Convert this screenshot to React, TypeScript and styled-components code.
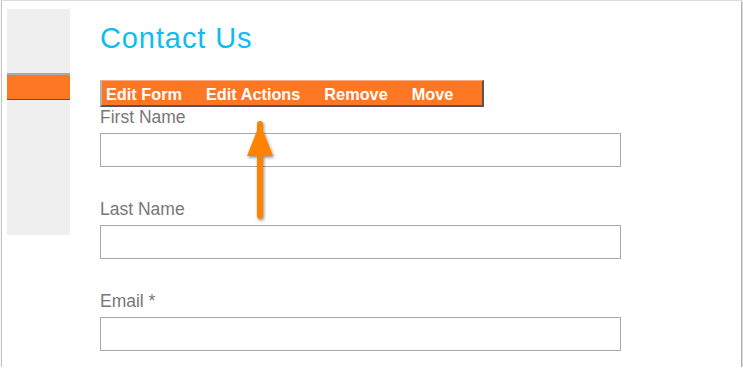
import React from "react";
import styled, { createGlobalStyle } from "styled-components";

const Global = createGlobalStyle`
  html, body { margin: 0; padding: 0; background: #ffffff; }
  body { font-family: "Liberation Sans", Arial, sans-serif; }
`;

const Frame = styled.div`
  position: relative;
  box-sizing: border-box;
  margin-left: 1px;
  width: 740px;
  height: 367px;
  background: #fff;
  border-top: 1px solid #dcdcdc;
  border-left: 1px solid #c4c4c4;
  box-shadow: 1px 1px 2px rgba(0, 0, 0, 0.45);
  padding: 8px 0 0 5px;
  display: flex;
  gap: 30px;
`;

const Sidebar = styled.div`
  width: 63px;
  height: 226px;
  background: #efefef;
  padding-top: 64px;
  box-sizing: border-box;
`;

const SideTab = styled.div`
  height: 24px;
  background: #fe7722;
  border-top: 2px solid #a9a9a9;
  border-bottom: 1px solid #555;
`;

const Main = styled.div`
  position: relative;
  display: flex;
  flex-direction: column;
  flex: 1;
`;

const Title = styled.h1`
  margin: 12px 0 0 0;
  font-family: "Liberation Sans", Arial, sans-serif;
  font-weight: normal;
  font-size: 29px;
  line-height: 34px;
  letter-spacing: 0.9px;
  color: #0bbdf2;
`;

const Toolbar = styled.div`
  margin-top: 25px;
  box-sizing: border-box;
  width: 384px;
  height: 27px;
  background: #fe7722;
  border-top: 1px solid #f6ad84;
  border-left: 2px solid #b5b5b5;
  border-right: 2px solid #555;
  border-bottom: 2px solid #555;
  padding: 2px 0 0 4px;
  display: flex;
  gap: 24px;
`;

const ToolItem = styled.span`
  font-family: "Liberation Sans", Arial, sans-serif;
  font-weight: bold;
  font-size: 16.3px;
  line-height: 23px;
  color: #fff;
  white-space: nowrap;
`;

const Field = styled.div`
  display: flex;
  flex-direction: column;
  margin-bottom: 32px;
`;

const Label = styled.label`
  font-family: "Liberation Sans", Arial, sans-serif;
  font-size: 17.5px;
  line-height: 20px;
  color: #777;
`;

const Input = styled.div`
  margin-top: 6px;
  box-sizing: border-box;
  width: 521px;
  height: 34px;
  border: 1px solid #a8a8a8;
  background: #fff;
`;

const Arrow = styled.svg`
  position: absolute;
  left: 140px;
  top: 101px;
  overflow: visible;
`;

const fields = ["First Name", "Last Name", "Email *"];
const actions = ["Edit Form", "Edit Actions", "Remove", "Move"];

export default function App() {
  return (
    <>
      <Global />
      <Frame>
        <Sidebar>
          <SideTab />
        </Sidebar>
        <Main>
          <Title>Contact Us</Title>
          <Toolbar>
            {actions.map((a) => (
              <ToolItem key={a}>{a}</ToolItem>
            ))}
          </Toolbar>
          {fields.map((f) => (
            <Field key={f}>
              <Label>{f}</Label>
              <Input />
            </Field>
          ))}
          <Arrow width="40" height="110" viewBox="0 0 40 110">
            <defs>
              <filter id="sh" x="-50%" y="-20%" width="200%" height="140%">
                <feDropShadow dx="1" dy="1.5" stdDeviation="1.5" floodColor="#000" floodOpacity="0.45" />
              </filter>
            </defs>
            <g filter="url(#sh)">
              <path d="M20 14 L20 106" stroke="#ff8200" strokeWidth="6" strokeLinecap="round" fill="none" />
              <path d="M20 13 L33 46 L7 46 Z" fill="#ff8200" />
            </g>
          </Arrow>
        </Main>
      </Frame>
    </>
  );
}
